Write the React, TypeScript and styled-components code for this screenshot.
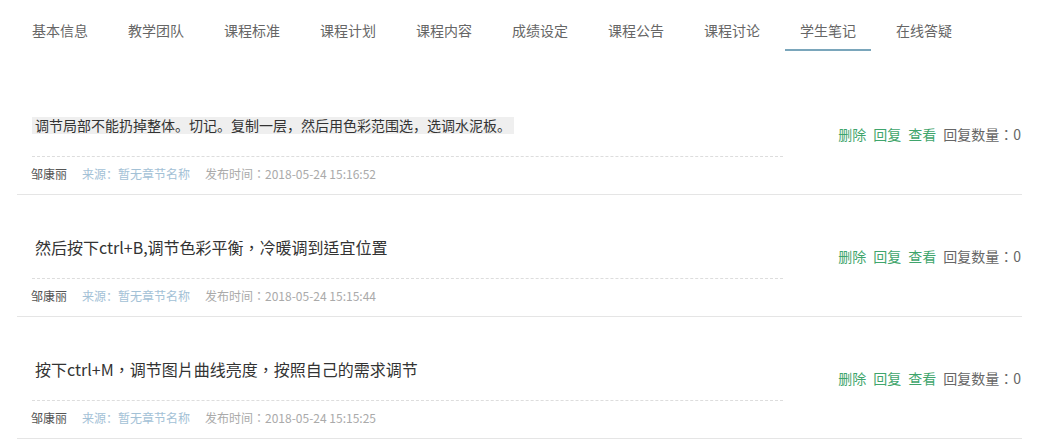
import styled, { createGlobalStyle } from 'styled-components';

const GlobalStyle = createGlobalStyle`
  html, body {
    margin: 0;
    padding: 0;
    background: #fff;
  }
  body {
    font-family: "Microsoft YaHei", "Noto Sans CJK SC", "Noto Sans", sans-serif;
    color: #333;
  }
`;

// centered full-width punctuation, like the original page font
const centeredPunct = `"Noto Sans CJK TC", "Noto Sans CJK SC", sans-serif`;

const Page = styled.div`
  width: 1005px;
  padding-left: 17px;
`;

const TabBar = styled.ul`
  display: flex;
  margin: 0;
  padding: 20px 0 0;
  list-style: none;
`;

const Tab = styled.li<{ $active?: boolean }>`
  padding: 0 15px;
  margin-right: 10px;
  height: 31px;
  box-sizing: border-box;
  font-size: 14px;
  line-height: 20px;
  color: #666;
  cursor: pointer;
  border-bottom: 2px solid ${({ $active }) => ($active ? '#7aa6bb' : 'transparent')};
`;

const NoteList = styled.div`
  margin-top: 22px;
`;

const NoteItem = styled.div`
  display: flex;
  align-items: center;
  border-bottom: 1px solid #e5e5e5;
`;

const NoteMain = styled.div`
  width: 751px;
  margin-left: 15px;
  padding-top: 42px;
`;

const NoteTitle = styled.div<{ $small?: boolean }>`
  height: 20px;
  padding-bottom: 21px;
  border-bottom: 1px dashed #ddd;
  font-size: ${({ $small }) => ($small ? '14px' : '16px')};
  line-height: 20px;
  color: #333;
  white-space: nowrap;
`;

const Highlight = styled.span`
  display: inline-block;
  padding: 0 3px;
  line-height: 17px;
  background: #efefef;
`;

const Plain = styled.span`
  padding-left: 3px;
  font-family: ${centeredPunct};
`;

const NoteMeta = styled.div`
  display: flex;
  gap: 15px;
  padding: 8px 0 11px;
  margin-left: -1px;
  font-size: 12px;
  line-height: 18px;
`;

const Author = styled.span`
  color: #555;
`;

const Source = styled.span`
  color: #a3c1d6;
`;

const Time = styled.span`
  color: #aaa;
  font-family: ${centeredPunct};
`;

const Actions = styled.div`
  display: flex;
  margin-left: auto;
  gap: 7px;
  padding-right: 1px;
  font-size: 14px;
  line-height: 20px;
`;

const ActionLink = styled.a`
  color: #3fa56c;
  text-decoration: none;
  cursor: pointer;
`;

const ReplyCount = styled.span`
  color: #666;
  font-family: ${centeredPunct};
`;

const tabs = ['基本信息', '教学团队', '课程标准', '课程计划', '课程内容', '成绩设定', '课程公告', '课程讨论', '学生笔记', '在线答疑'];

const notes = [
  { text: '调节局部不能扔掉整体。切记。复制一层，然后用色彩范围选，选调水泥板。', time: '2018-05-24 15:16:52', marked: true },
  { text: '然后按下ctrl+B,调节色彩平衡，冷暖调到适宜位置', time: '2018-05-24 15:15:44', marked: false },
  { text: '按下ctrl+M，调节图片曲线亮度，按照自己的需求调节', time: '2018-05-24 15:15:25', marked: false },
];

export default function App() {
  return (
    <>
      <GlobalStyle />
      <Page>
        <TabBar>
          {tabs.map((t) => (
            <Tab key={t} $active={t === '学生笔记'}>{t}</Tab>
          ))}
        </TabBar>
        <NoteList>
          {notes.map((n) => (
            <NoteItem key={n.time}>
              <NoteMain>
                <NoteTitle $small={n.marked}>
                  {n.marked ? <Highlight>{n.text}</Highlight> : <Plain>{n.text}</Plain>}
                </NoteTitle>
                <NoteMeta>
                  <Author>邹康丽</Author>
                  <Source>来源：暂无章节名称</Source>
                  <Time>发布时间：{n.time}</Time>
                </NoteMeta>
              </NoteMain>
              <Actions>
                <ActionLink>删除</ActionLink>
                <ActionLink>回复</ActionLink>
                <ActionLink>查看</ActionLink>
                <ReplyCount>回复数量：0</ReplyCount>
              </Actions>
            </NoteItem>
          ))}
        </NoteList>
      </Page>
    </>
  );
}
